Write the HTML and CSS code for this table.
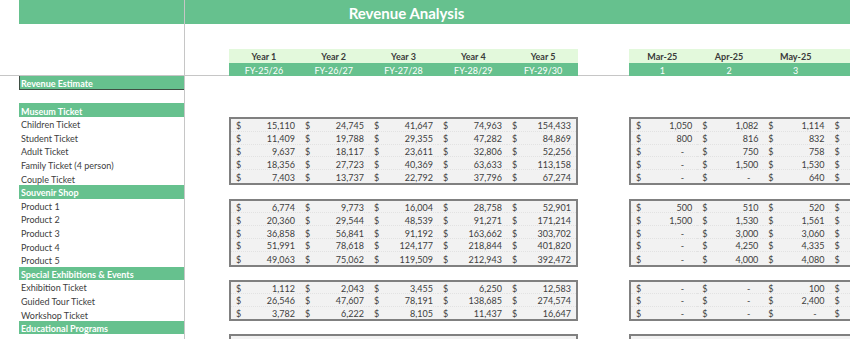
FILE: index.html
```html
<!DOCTYPE html>
<html lang="en">
<head>
    <meta charset="UTF-8">
    <meta name="viewport" content="width=device-width, initial-scale=1.0">
    <title>Revenue Analysis</title>
    <link rel="stylesheet" href="styles.css">
</head>
<body>
    <div class="sheet">
        <div class="freeze-h"></div>

        <div class="title-side"></div>
        <div class="title">Revenue Analysis</div>
        <div class="title-end"></div>

        <div class="head years">
            <div class="head-top">Year 1</div>
            <div class="head-top">Year 2</div>
            <div class="head-top">Year 3</div>
            <div class="head-top">Year 4</div>
            <div class="head-top">Year 5</div>
            <div class="head-sub">FY-25/26</div>
            <div class="head-sub">FY-26/27</div>
            <div class="head-sub">FY-27/28</div>
            <div class="head-sub">FY-28/29</div>
            <div class="head-sub">FY-29/30</div>
        </div>

        <div class="head months">
            <div class="head-top">Mar-25</div>
            <div class="head-top">Apr-25</div>
            <div class="head-top">May-25</div>
            <div class="head-top"></div>
            <div class="head-sub">1</div>
            <div class="head-sub">2</div>
            <div class="head-sub">3</div>
            <div class="head-sub"></div>
        </div>

        <div class="labels">
            <div class="bar bar-main">Revenue Estimate</div>
            <div class="label"></div>
            <div class="bar">Museum Ticket</div>
            <div class="label">Children Ticket</div>
            <div class="label">Student Ticket</div>
            <div class="label">Adult Ticket</div>
            <div class="label">Family Ticket (4 person)</div>
            <div class="label">Couple Ticket</div>
            <div class="bar">Souvenir Shop</div>
            <div class="label">Product 1</div>
            <div class="label">Product 2</div>
            <div class="label">Product 3</div>
            <div class="label">Product 4</div>
            <div class="label">Product 5</div>
            <div class="bar">Special Exhibitions &amp; Events</div>
            <div class="label">Exhibition Ticket</div>
            <div class="label">Guided Tour Ticket</div>
            <div class="label">Workshop Ticket</div>
            <div class="bar">Educational Programs</div>
        </div>

        <div class="box box-year g-museum" id="yMuseum"></div>
        <div class="box box-month g-museum" id="mMuseum"></div>
        <div class="box box-year g-shop" id="yShop"></div>
        <div class="box box-month g-shop" id="mShop"></div>
        <div class="box box-year g-events" id="yEvents"></div>
        <div class="box box-month g-events" id="mEvents"></div>
        <div class="box box-year g-edu"></div>
        <div class="box box-month g-edu"></div>

        <div class="freeze-v"></div>
    </div>

    <script>
        // null = value sits past the right edge of the window
        const yearly = {
            yMuseum: [
                [15110, 24745, 41647, 74963, 154433],
                [11409, 19788, 29355, 47282, 84869],
                [9637, 18117, 23611, 32806, 52256],
                [18356, 27723, 40369, 63633, 113158],
                [7403, 13737, 22792, 37796, 67274]
            ],
            yShop: [
                [6774, 9773, 16004, 28758, 52901],
                [20360, 29544, 48539, 91271, 171214],
                [36858, 56841, 91192, 163662, 303702],
                [51991, 78618, 124177, 218844, 401820],
                [49063, 75062, 119509, 212943, 392472]
            ],
            yEvents: [
                [1112, 2043, 3455, 6250, 12583],
                [26546, 47607, 78191, 138685, 274574],
                [3782, 6222, 8105, 11437, 16647]
            ]
        };

        const monthly = {
            mMuseum: [
                [1050, 1082, 1114, null],
                [800, 816, 832, null],
                [0, 750, 758, null],
                [0, 1500, 1530, null],
                [0, 0, 640, null]
            ],
            mShop: [
                [500, 510, 520, null],
                [1500, 1530, 1561, null],
                [0, 3000, 3060, null],
                [0, 4250, 4335, null],
                [0, 4000, 4080, null]
            ],
            mEvents: [
                [0, 0, 100, null],
                [0, 0, 2400, null],
                [0, 0, 0, null]
            ]
        };

        function fillBox(id, rows) {
            const box = document.getElementById(id);
            box.style.gridTemplateRows = `repeat(${rows.length}, 1fr)`;
            rows.forEach(row => {
                row.forEach(value => {
                    const cell = document.createElement("div");
                    cell.className = value ? "cell" : "cell cell-nil";
                    if (value === null) {
                        cell.innerHTML = `<span>$</span>`;
                    } else {
                        cell.innerHTML = `<span>$</span><span>${value ? value.toLocaleString("en-US") : "-"}</span>`;
                    }
                    box.appendChild(cell);
                });
            });
        }

        for (const id in yearly) fillBox(id, yearly[id]);
        for (const id in monthly) fillBox(id, monthly[id]);
    </script>
</body>
</html>
```

FILE: styles.css
```css
:root {
    --green: #66c18e;
    --green-light: #e3f9dc;
    --text: #404040;
    --freeze: #c6c6c6;
    --box-border: #808080;
    --box-fill: #f2f2f2;
}

body {
    margin: 0;
    background: #fff;
    font-family: Lato, "Open Sans", sans-serif;
    font-size: 9px;
    color: var(--text);
    overflow: hidden;
}

.sheet {
    display: grid;
    grid-template-columns: 19px 165px 45px repeat(5, 69.8px) 51px repeat(4, 66.7px);
    grid-template-rows: 24px 25px repeat(26, 13.6px);
    width: 850px;
    overflow: hidden;
}

/* frozen pane lines */
.freeze-h {
    grid-column: 1 / -1;
    grid-row: 4;
    align-self: end;
    border-bottom: 1px solid var(--freeze);
}

.freeze-v {
    grid-column: 3;
    grid-row: 1 / -1;
    border-left: 1px solid var(--freeze);
}

/* title row */
.title-side,
.title,
.title-end {
    grid-row: 1;
    background: var(--green);
}

.title-side {
    grid-column: 2;
}

.title {
    grid-column: 3 / 10;
    color: #fff;
    font-weight: 700;
    font-size: 15px;
    display: flex;
    align-items: center;
    justify-content: center;
    padding-top: 1px;
}

.title-end {
    grid-column: 10 / -1;
}

/* column headers */
.head {
    grid-row: 3 / 5;
    display: grid;
    grid-template-rows: 1fr 1fr;
}

.years {
    grid-column: 4 / 9;
    grid-template-columns: repeat(5, 1fr);
}

.months {
    grid-column: 10 / -1;
    grid-template-columns: repeat(4, 1fr);
}

.head-top,
.head-sub {
    display: flex;
    align-items: center;
    justify-content: center;
    padding-top: 2px;
}

.head-top {
    background: var(--green-light);
    font-weight: 700;
    color: #3a3a3a;
}

.head-sub {
    background: var(--green);
    color: #fff;
}

/* row labels */
.labels {
    grid-column: 2;
    grid-row: 5 / -1;
    display: grid;
    grid-auto-rows: 13.6px;
    align-content: start;
}

.label,
.bar {
    display: flex;
    align-items: center;
    padding: 2px 0 0 2px;
    white-space: nowrap;
}

.bar {
    background: var(--green);
    color: #fff;
    font-weight: 700;
}

.bar-main {
    border-left: 1px solid #3f4f44;
    border-bottom: 1px solid #3f4f44;
    padding-left: 1px;
}

/* number boxes */
.box {
    display: grid;
    background: var(--box-fill);
    border: 2px solid var(--box-border);
    box-sizing: border-box;
    min-height: 0;
}

.box-year {
    grid-column: 4 / 9;
    grid-template-columns: repeat(5, 1fr);
}

.box-month {
    grid-column: 10 / -1;
    grid-template-columns: repeat(4, 1fr);
    border-right: none;
}

.g-museum { grid-row: 8 / 13; }
.g-shop { grid-row: 14 / 19; }
.g-events { grid-row: 20 / 23; }
.g-edu { grid-row: 24 / 27; }

.cell {
    display: flex;
    justify-content: space-between;
    align-items: center;
    padding: 2px 5px 0 5px;
    border-bottom: 1px dotted #e2e2e2;
    min-height: 0;
}

.box-year .cell:nth-last-child(-n+5),
.box-month .cell:nth-last-child(-n+4) {
    border-bottom: none;
}

.cell-nil span:last-child {
    padding-right: 8px;
}
```
